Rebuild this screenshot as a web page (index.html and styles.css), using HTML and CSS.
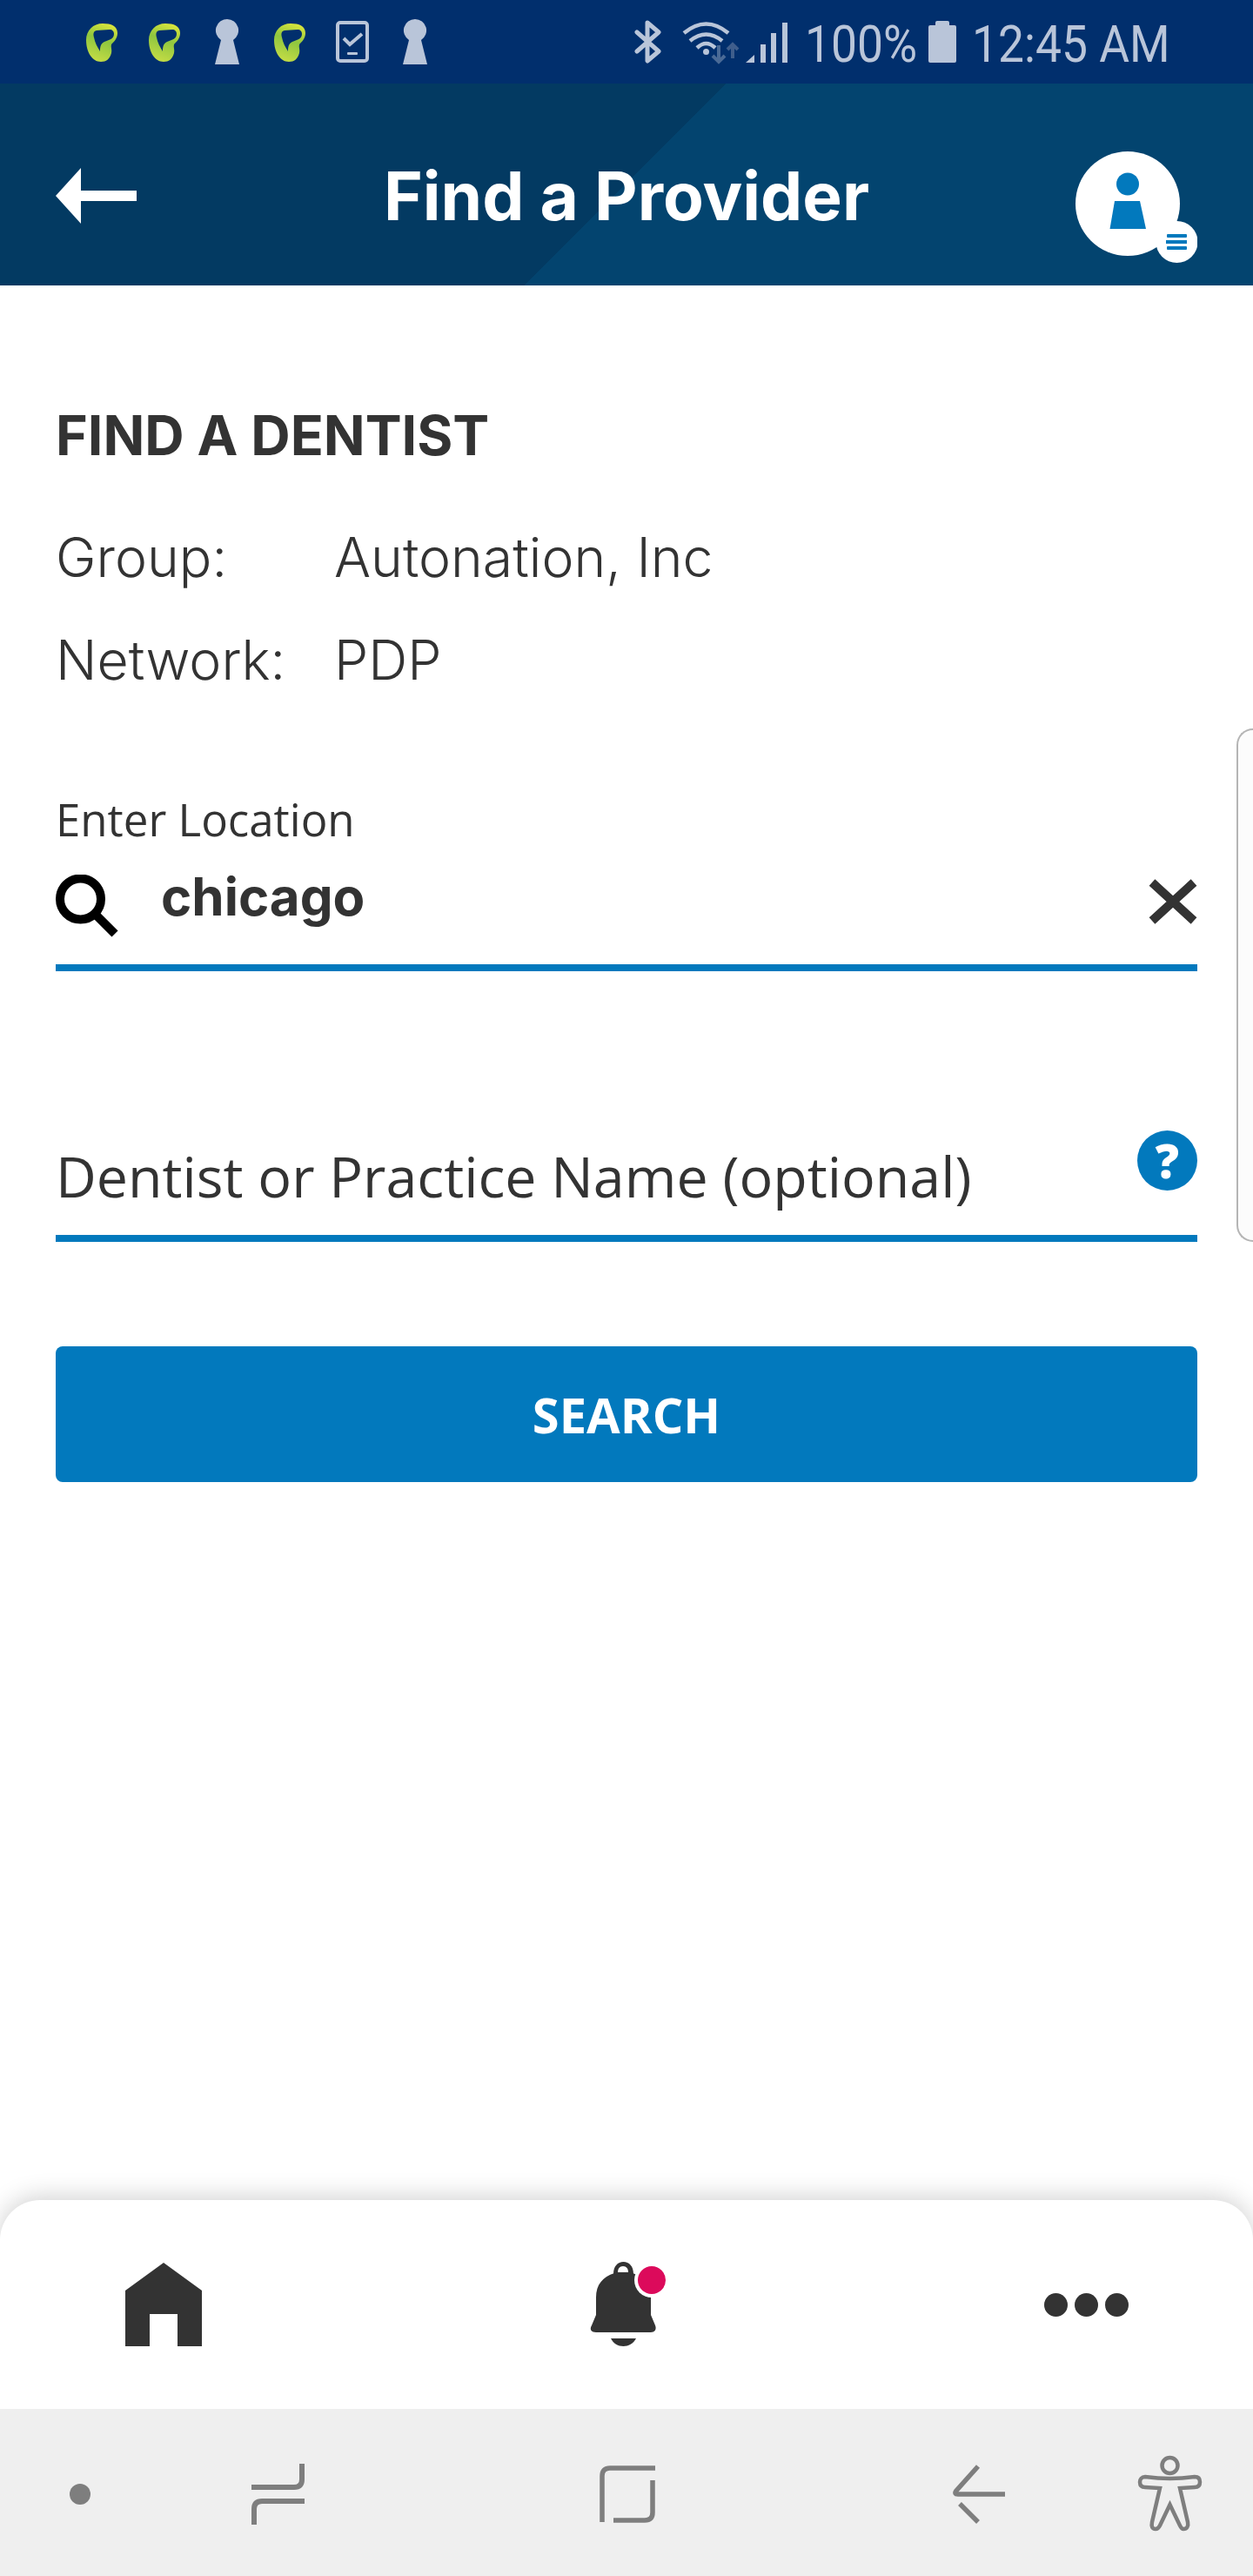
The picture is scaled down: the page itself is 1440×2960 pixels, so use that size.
FILE: index.html
```html
<!DOCTYPE html>
<html>

<head>
    <meta charset="utf-8">
    <title>Find a Provider</title>
    <meta name="viewport" content="width=device-width, initial-scale=1">
    <link rel="stylesheet" href="styles.css">
</head>

<body>
    <svg class="defs" aria-hidden="true">
        <defs>
            <linearGradient id="leafFill" x1="0.7" y1="0" x2="0.4" y2="1">
                <stop offset="0" stop-color="#dbe63c" />
                <stop offset="0.45" stop-color="#8fc63f" />
                <stop offset="1" stop-color="#c4dc45" />
            </linearGradient>
            <symbol id="leaf" viewBox="0 0 36 44">
                <path fill="url(#leafFill)" fill-rule="evenodd"
                    d="M19 0C29 0 36 3 36 11C36 17 32 21 29 24C28 27 30 30 29 34C27 41 23 44 17 44C7 44 0 33 0 19C0 8 8 0 19 0ZM12 8C8 9 8 12 9 16C10 22 13 27 16 32C16 26 17 23 21 21C26 19 32 18 32 12C32 9 30 7 27 7Z" />
            </symbol>
            <symbol id="keyhole" viewBox="0 0 28 52">
                <path fill="#b9c5d9" d="M14 0A13 13 0 0 1 21 24L28 52H0L7 24A13 13 0 0 1 14 0Z" />
            </symbol>
        </defs>
    </svg>

    <div class="page">
        <div class="statusBar">
            <svg class="leafIcon"><use href="#leaf" /></svg>
            <svg class="leafIcon"><use href="#leaf" /></svg>
            <svg class="keyIcon"><use href="#keyhole" /></svg>
            <svg class="leafIcon"><use href="#leaf" /></svg>
            <svg class="phoneIcon" viewBox="0 0 38 48">
                <rect x="2" y="2" width="34" height="44" rx="3" fill="none" stroke="#b9c5d9" stroke-width="4" />
                <path d="M9 20L16 27L30 15" fill="none" stroke="#b9c5d9" stroke-width="4" />
                <rect x="13" y="36" width="12" height="3" rx="1" fill="#b9c5d9" />
            </svg>
            <svg class="keyIcon"><use href="#keyhole" /></svg>

            <div class="statusRight">
                <svg class="btIcon" viewBox="0 0 32 50">
                    <path d="M3 14L28 36L15 47V3L28 14L3 36" fill="none" stroke="#b9c5d9" stroke-width="5" stroke-linejoin="round" stroke-linecap="round" />
                </svg>
                <svg class="wifiIcon" viewBox="0 0 66 50">
                    <g fill="none" stroke="#b9c5d9" stroke-width="4.500">
                        <path d="M2 14Q27.500 -7 53 14" />
                        <path d="M9 23Q27.500 8 46 23" />
                        <path d="M17 31Q27.500 21 38 31" />
                    </g>
                    <circle cx="27.500" cy="35.500" r="3.500" fill="#b9c5d9" />
                    <path d="M42 28V46M35 40L42 47L49 40" fill="none" stroke="#4a6a96" stroke-width="4" />
                    <path d="M58 43V28M52 33L58 27L64 33" fill="none" stroke="#3f5e8c" stroke-width="4" />
                </svg>
                <svg class="signalIcon" viewBox="0 0 48 47">
                    <g fill="#b9c5d9">
                        <path d="M0 47L10 38V47Z" />
                        <rect x="17" y="26" width="6" height="21" />
                        <rect x="29" y="13" width="6" height="34" />
                        <rect x="42" y="1" width="6" height="46" />
                    </g>
                </svg>
                <span class="statusText batteryText">100%</span>
                <svg class="batteryIcon" viewBox="0 0 32 48">
                    <g fill="#b9c5d9">
                        <rect x="8" y="0" width="16" height="8" rx="2" />
                        <rect x="0" y="5" width="32" height="43" rx="2" />
                    </g>
                </svg>
                <span class="statusText timeText">12:45 AM</span>
            </div>
        </div>

        <header class="topBar">
            <svg class="backArrow" viewBox="0 0 93 64">
                <path fill="#fff" d="M0 32L29 0V26H93V38H29V64Z" />
            </svg>
            <h1 class="title">Find a Provider</h1>
            <svg class="avatar" viewBox="0 0 140 128">
                <circle cx="60" cy="60" r="60" fill="#fff" />
                <circle cx="60" cy="37.5" r="13" fill="#0279bd" />
                <path d="M45 57H74L81 89H39.5Z" fill="#0279bd" />
                <circle cx="116.5" cy="104" r="24" fill="#fff" />
                <g fill="#0279bd">
                    <rect x="105" y="95" width="23" height="4" rx="1" />
                    <rect x="104" y="102" width="24" height="4" />
                    <rect x="105" y="109" width="23" height="4" rx="1" />
                </g>
            </svg>
        </header>

        <main class="content">
            <h2 class="sectionTitle">FIND A DENTIST</h2>

            <div class="infoRow infoRowFirst">
                <span class="infoLabel">Group:</span>
                <span>Autonation, Inc</span>
            </div>
            <div class="infoRow">
                <span class="infoLabel">Network:</span>
                <span>PDP</span>
            </div>

            <div class="fieldLabel">Enter Location</div>
            <div class="field fieldLocation">
                <svg class="searchIcon" viewBox="0 0 72 72">
                    <circle cx="28.5" cy="28" r="23.5" fill="none" stroke="#000" stroke-width="10" />
                    <path d="M45 45L68 68" fill="none" stroke="#000" stroke-width="10" />
                </svg>
                <span class="fieldValue">chicago</span>
                <svg class="clearIcon" viewBox="0 0 56 56">
                    <path d="M4 6L52 50M52 6L4 50" fill="none" stroke="#333" stroke-width="10" />
                </svg>
            </div>

            <div class="field fieldName">
                <span class="fieldHint">Dentist or Practice Name (optional)</span>
                <span class="helpIcon">?</span>
            </div>

            <button class="searchButton" type="button">SEARCH</button>
        </main>

        <div class="edgeHandle"></div>

        <nav class="tabBar">
            <svg class="homeIcon" viewBox="0 0 88 96">
                <path fill="#333" d="M0 32L44 0L88 32V96H60V59H28V96H0Z" />
            </svg>
            <svg class="bellIcon" viewBox="0 0 130 130">
                <g fill="#333">
                    <path fill-rule="evenodd" d="M45 33C45 24 50 19 56.500 19C63 19 68 24 68 33ZM50 31H62C62 27 60 24 56 24C52 24 50 27 50 31Z" />
                    <path d="M25 60C25 45 33 36 46 32H67C80 36 88 45 88 60V80L93 92C95 97 92 100 88 100H25C20 100 17 97 20 92L25 80Z" />
                    <path d="M42 107H71C68 113 62 116 56.500 116C50 116 45 113 42 107Z" />
                </g>
                <circle cx="89" cy="40" r="20" fill="#fff" />
                <circle cx="89" cy="40" r="16" fill="#dc0a5b" />
            </svg>
            <svg class="moreIcon" viewBox="0 0 97 27">
                <g fill="#333">
                    <circle cx="13.500" cy="13.500" r="13.500" />
                    <circle cx="48.500" cy="13.500" r="13.500" />
                    <circle cx="83.500" cy="13.500" r="13.500" />
                </g>
            </svg>
        </nav>

        <div class="navBar">
            <span class="navDot"></span>
            <svg class="navRecent" viewBox="0 0 61 70">
                <path d="M58 0V18Q58 27 49 27H0M61 43H12Q3 43 3 52V70" fill="none" stroke="#7e7e7e" stroke-width="6" />
            </svg>
            <svg class="navHome" viewBox="0 0 64 66">
                <path d="M3 65V12Q3 3 12 3H64M61 17V54Q61 63 52 63H16" fill="none" stroke="#7e7e7e" stroke-width="5.500" />
            </svg>
            <svg class="navBack" viewBox="0 0 61 68">
                <path d="M30 2L5 30Q2 34 7 34H61M9 45L30 66" fill="none" stroke="#7e7e7e" stroke-width="5.500" />
            </svg>
            <svg class="navAccess" viewBox="15 10 76 92">
                <g fill="none" stroke="#7e7e7e" stroke-width="4.500">
                    <circle cx="53.500" cy="23" r="9" />
                    <path d="M25 36Q40 38 53.500 38Q67 38 82 36C87 36 88 39 88 42C88 46 86 48 82 48L65 49L74 88C75 93 73 96 69 96C67 96 66 94 65 92L53.500 68L42 92C41 94 40 96 37 96C33 96 32 93 33 88L42 49L25 48C21 48 19 46 19 42C19 39 21 36 25 36Z" />
                </g>
            </svg>
        </div>
    </div>
</body>

</html>
```

FILE: styles.css
```css
* {
    box-sizing: border-box;
    padding: 0;
    margin: 0;
}

body {
    background-color: #fff;
    color: #333;
    font-family: "Inter", "Liberation Sans", sans-serif;
}

.defs {
    position: absolute;
    width: 0;
    height: 0;
}

.page {
    position: relative;
    width: 1440px;
    height: 2960px;
    display: flex;
    flex-direction: column;
    overflow: hidden;
}

/* status bar */
.statusBar {
    height: 96px;
    flex-shrink: 0;
    display: flex;
    align-items: center;
    gap: 36px;
    padding-left: 99px;
    padding-right: 98px;
    background-color: #012f6d;
}

.leafIcon {
    width: 36px;
    height: 44px;
    margin-top: 1px;
}

.keyIcon {
    width: 28px;
    height: 52px;
    margin: 0 4px;
}

.phoneIcon {
    width: 38px;
    height: 48px;
    margin: 0 -1px;
}

.statusRight {
    margin-left: auto;
    display: flex;
    align-items: center;
}

.btIcon {
    width: 32px;
    height: 50px;
}

.wifiIcon {
    width: 66px;
    height: 50px;
    margin-left: 23px;
    margin-top: 2px;
}

.signalIcon {
    width: 48px;
    height: 47px;
    margin-left: 7px;
    margin-top: 1px;
}

.statusText {
    display: inline-block;
    font-family: "Roboto", sans-serif;
    font-size: 60px;
    line-height: 70px;
    margin-top: 6px;
    color: #b9c5d9;
    white-space: nowrap;
    transform: scaleX(.89);
    transform-origin: left center;
}

.batteryText {
    width: 124px;
    margin-left: 20px;
}

.batteryIcon {
    width: 32px;
    height: 48px;
    margin-left: 18px;
}

.timeText {
    width: 225px;
    margin-left: 18px;
}

/* header */
.topBar {
    height: 232px;
    flex-shrink: 0;
    display: grid;
    grid-template-columns: 1fr auto 1fr;
    align-items: center;
    padding: 26px 64px 0;
    background: linear-gradient(135deg, #033a62 590px, #03446f 590px);
}

.backArrow {
    width: 93px;
    height: 64px;
}

.title {
    font-size: 76.500px;
    font-weight: 700;
    line-height: 90px;
    color: #fff;
}

.avatar {
    width: 140px;
    height: 128px;
    justify-self: end;
    margin-top: 26px;
}

/* form */
.content {
    flex: 1;
    display: flex;
    flex-direction: column;
    padding: 134px 64px 0;
}

.sectionTitle {
    font-size: 62.800px;
    font-weight: 700;
    line-height: 76px;
    color: #333;
}

.infoRow {
    display: flex;
    height: 60px;
    margin-top: 58px;
    font-size: 62.500px;
    font-weight: 300;
    line-height: 60px;
}

.infoRowFirst {
    margin-top: 72px;
}

.infoLabel {
    width: 320px;
}

.fieldLabel {
    margin-top: 123px;
    font-family: "Open Sans", sans-serif;
    font-size: 51px;
    line-height: 60px;
}

.field {
    display: flex;
    align-items: flex-start;
    border-bottom: 8px solid #0279bd;
}

.fieldLocation {
    height: 145px;
}

.searchIcon {
    width: 72px;
    height: 72px;
    margin-top: 34px;
}

.fieldValue {
    margin-top: 19px;
    margin-left: 49px;
    font-size: 60px;
    font-weight: 700;
    line-height: 80px;
}

.clearIcon {
    width: 56px;
    height: 56px;
    margin-top: 37px;
    margin-left: auto;
}

.fieldName {
    height: 128px;
    margin-top: 183px;
}

.fieldHint {
    margin-top: 12px;
    font-family: "Open Sans", sans-serif;
    font-size: 64.500px;
    line-height: 80px;
}

.helpIcon {
    width: 69px;
    height: 69px;
    margin-left: auto;
    border-radius: 50%;
    background-color: #0279bd;
    color: #fff;
    font-family: "Open Sans", sans-serif;
    font-size: 54px;
    font-weight: 800;
    line-height: 69px;
    text-align: center;
}

.searchButton {
    height: 156px;
    margin-top: 120px;
    border: none;
    border-radius: 8px;
    background-color: #0279bd;
    color: #fff;
    font-family: "Open Sans", sans-serif;
    font-size: 56px;
    font-weight: 700;
}

/* samsung edge panel handle */
.edgeHandle {
    position: absolute;
    top: 837px;
    right: 0;
    width: 19px;
    height: 590px;
    border: 2px solid #b5b5b5;
    border-right: none;
    border-radius: 20px 0 0 20px;
    background-color: #fcfcfc;
}

/* bottom tabs */
.tabBar {
    height: 240px;
    flex-shrink: 0;
    display: flex;
    align-items: center;
    border-radius: 46px 46px 0 0;
    background-color: #fff;
    box-shadow: 0 -4px 28px rgba(0, 0, 0, .18);
}

.homeIcon {
    width: 88px;
    height: 96px;
    margin-left: 144px;
}

.bellIcon {
    width: 130px;
    height: 130px;
    margin-left: 428px;
    margin-bottom: 6px;
}

.moreIcon {
    width: 97px;
    height: 27px;
    margin-left: 410px;
}

/* android nav */
.navBar {
    height: 192px;
    flex-shrink: 0;
    display: flex;
    align-items: center;
    padding-top: 4px;
    background-color: #efefef;
}

.navDot {
    width: 24px;
    height: 24px;
    margin-left: 80px;
    border-radius: 50%;
    background-color: #7e7e7e;
}

.navRecent {
    width: 61px;
    height: 70px;
    margin-left: 185px;
}

.navHome {
    width: 64px;
    height: 66px;
    margin-left: 339px;
}

.navBack {
    width: 61px;
    height: 68px;
    margin-left: 341px;
}

.navAccess {
    width: 76px;
    height: 92px;
    margin-left: 151px;
}
```
